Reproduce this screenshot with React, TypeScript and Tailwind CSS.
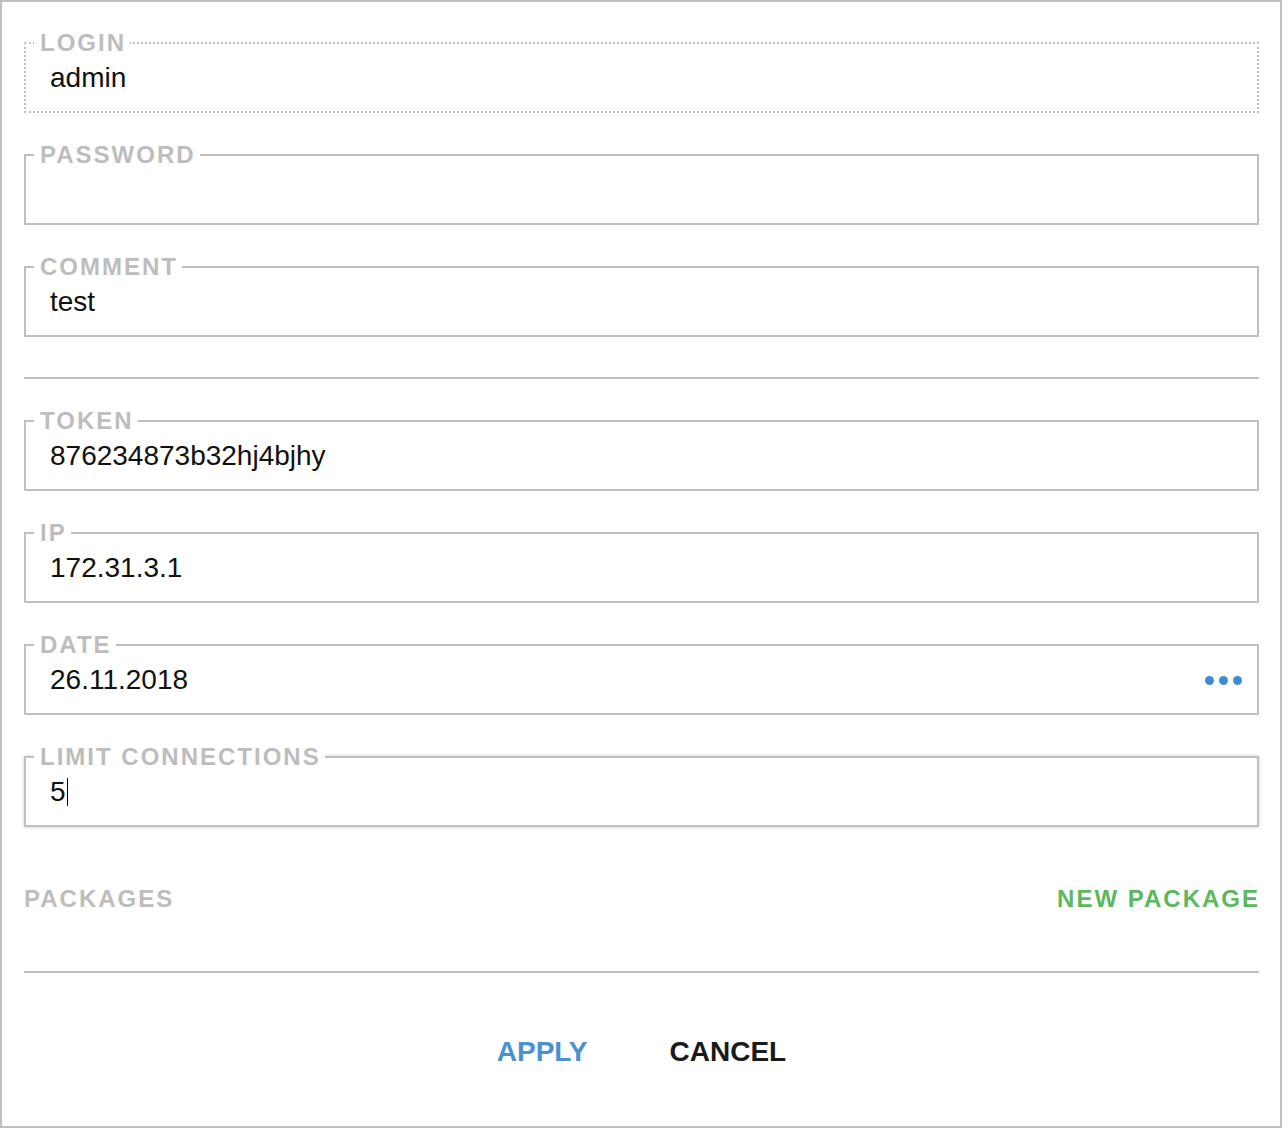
import React from 'react';

type Field = {
  label: string;
  value?: string;
  dotted?: boolean;
  dots?: boolean;
  focused?: boolean;
};

const topFields: Field[] = [
  { label: 'Login', value: 'admin', dotted: true },
  { label: 'Password', value: '' },
  { label: 'Comment', value: 'test' },
];

const bottomFields: Field[] = [
  { label: 'Token', value: '876234873b32hj4bjhy' },
  { label: 'IP', value: '172.31.3.1' },
  { label: 'Date', value: '26.11.2018', dots: true },
  { label: 'Limit connections', value: '5', focused: true },
];

const FieldBox: React.FC<{ field: Field }> = ({ field }) => {
  return (
    <fieldset
      className={
        'm-0 p-0 pb-[17px] border-2 border-[#c0c0c0] ' +
        (field.dotted ? 'border-dotted ' : 'border-solid ') +
        (field.focused ? 'shadow-[0_0_3px_rgba(0,0,0,0.22)]' : '')
      }
    >
      <legend className="ml-[8px] pl-[6px] pr-[4px] bg-white text-[24px] leading-[26px] font-bold uppercase tracking-[2px] text-[#bdbdbd]">
        {field.label}
      </legend>
      <div className="pt-[6px] pl-[24px] pr-[15px] flex items-center h-[38px]">
        <div className="flex-1 flex items-center h-[32px] text-[28px] leading-[32px] text-[#111]">
          {field.value}
          {field.focused && <span className="inline-block w-px h-[28px] bg-black ml-px"></span>}
        </div>
        {field.dots && (
          <div className="flex items-center gap-[5px]">
            <span className="w-[9px] h-[9px] rounded-full bg-[#3f8bd4]"></span>
            <span className="w-[9px] h-[9px] rounded-full bg-[#3f8bd4]"></span>
            <span className="w-[9px] h-[9px] rounded-full bg-[#3f8bd4]"></span>
          </div>
        )}
      </div>
    </fieldset>
  );
};

const App: React.FC = () => {
  return (
    <div
      className="w-[1282px] h-[1128px] bg-white border-2 border-[#c0c0c0] pt-[28px] pl-[22px] pr-[21px] flex flex-col gap-[29px]"
      style={{ fontFamily: '"Liberation Sans", Arial, Helvetica, sans-serif' }}
    >
      {topFields.map((f) => (
        <FieldBox key={f.label} field={f} />
      ))}

      {/* divider */}
      <div className="mt-[11px] border-t-2 border-[#c0c0c0]"></div>

      {bottomFields.map((f) => (
        <FieldBox key={f.label} field={f} />
      ))}

      {/* packages */}
      <div className="mt-[30px] flex items-center justify-between h-[26px] text-[24px] leading-[26px] font-bold uppercase tracking-[2px]">
        <span className="text-[#bdbdbd]">Packages</span>
        <span className="text-[#5cb85c] -mr-[1px]">New package</span>
      </div>
      <div className="mt-[30px] border-t-2 border-[#c0c0c0]"></div>

      <div className="mt-[34px] flex justify-center gap-[82px] text-[28px] leading-[32px] font-bold uppercase">
        <button className="text-[#4a90d2] uppercase font-bold">Apply</button>
        <button className="text-[#1a1a1a] uppercase font-bold">Cancel</button>
      </div>
    </div>
  );
};

export default App;
